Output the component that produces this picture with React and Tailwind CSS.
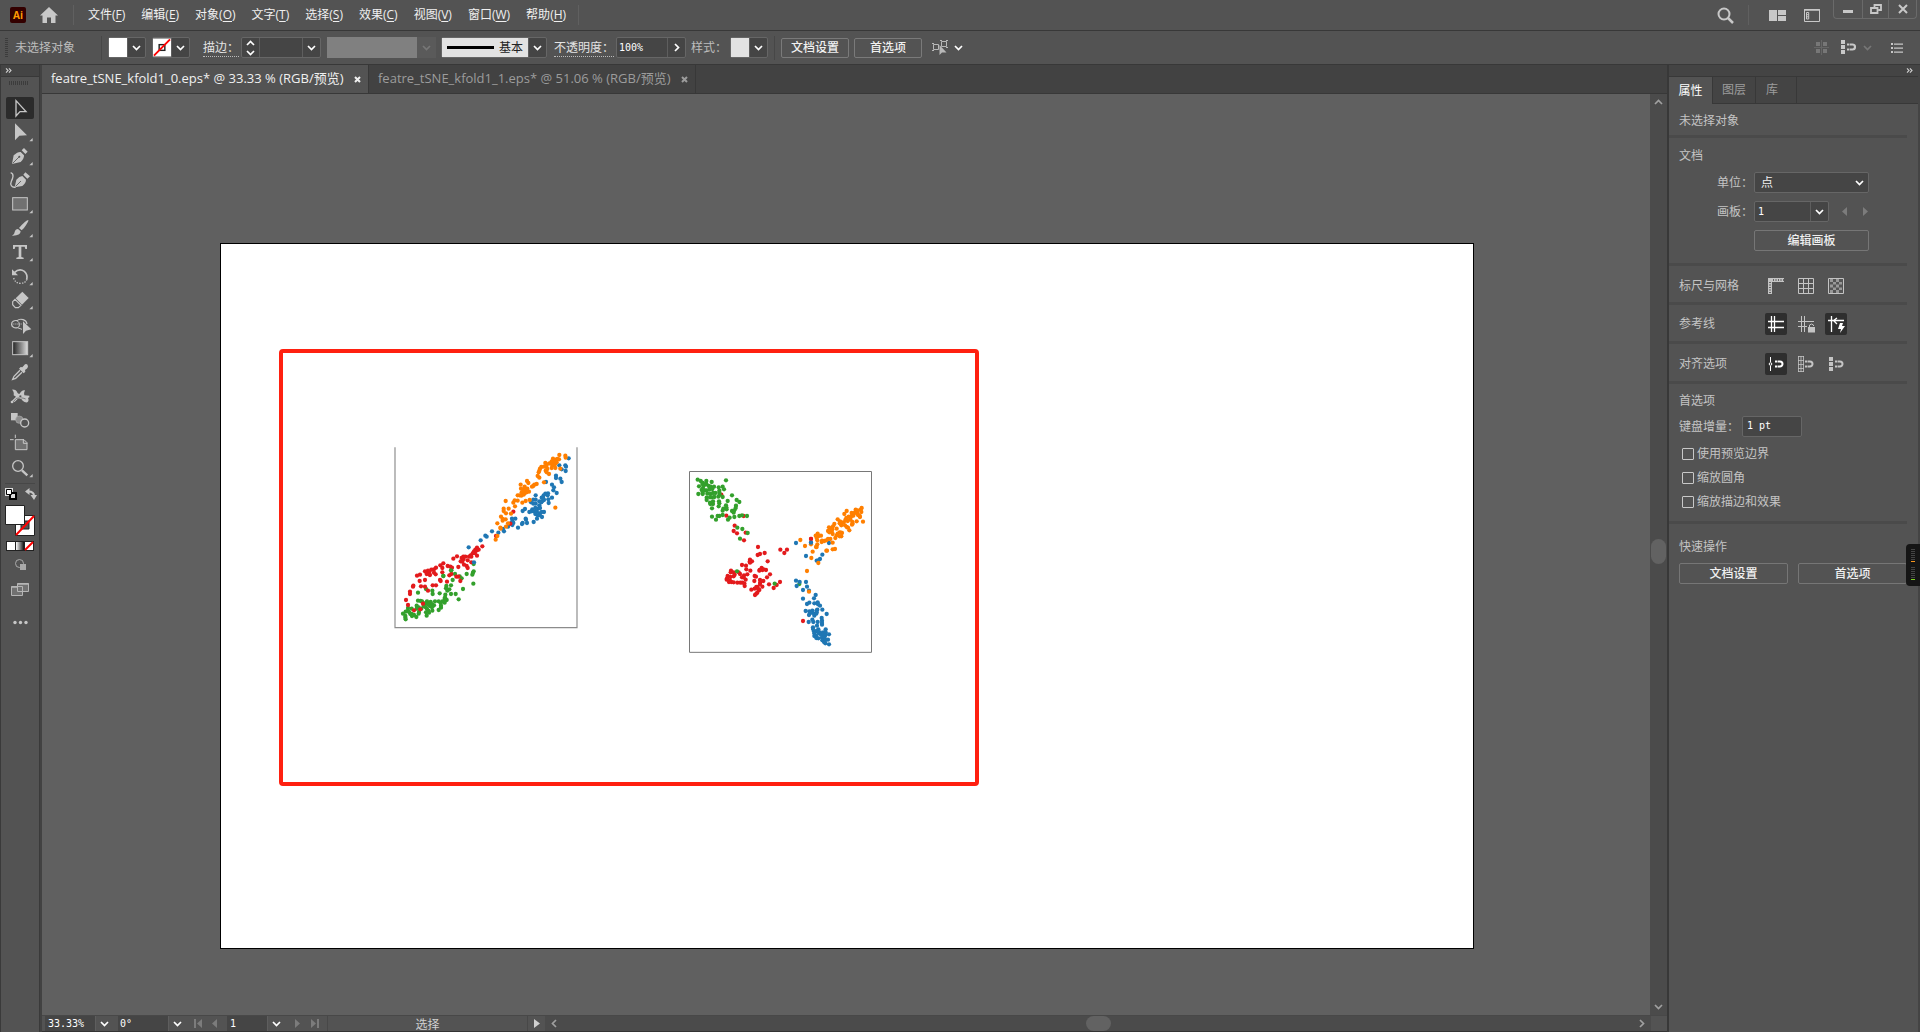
import React, { useState } from 'react';
import clsx from 'clsx';

const blue = '#1f77b4';
const orange = '#ff7f00';
const red = '#e31a1c';
const green = '#33a02c';

const leftPlot = [
  { color: blue, points: '566,85 538,106 556,106 558,110 557,123 545,118 528,137 528,144 541,146 545,156 498,156 516,164 522,172 520,181 530,189 504,190 496,191 491,196 485,203 516,203 467,196 460,209 453,217 460,221 467,221 467,209 478,214 486,214 492,210 505,208 506,219 503,196 490,206 484,217 478,226 474,236 480,234 466,234 457,238 448,246 455,244 462,244 435,237 428,243 470,244 478,250 485,246 492,246 466,252 473,256 480,256 486,261 471,266 461,276 437,266 438,269 428,279 441,279 426,282 414,293 396,266 406,266 397,274 400,279 397,285 391,281 384,290 369,297 372,304 355,308 336,304 316,317 320,320 302,331 266,352' },
  { color: green, points: '281,402 281,424 279,428 277,434 260,432 225,432 214,421 190,438 239,439 245,445 218,450 280,461 213,466 249,477 199,468 198,475 208,478 202,482 213,492 196,494 227,492 236,508 200,510 194,507 179,490 158,492 157,482 138,477 114,488 195,502 194,518 187,514 176,514 182,519 165,514 152,516 141,514 138,519 126,514 114,512 122,513 147,520 154,523 162,526 183,527 183,533 176,540 157,523 156,532 157,542 150,528 144,524 132,524 137,532 141,537 145,542 147,548 138,547 140,557 131,528 124,536 116,532 110,527 110,536 117,546 116,551 109,561 102,555 95,552 95,536 84,534 84,542 88,547 91,552 96,558 77,545 69,551 76,558 76,563 77,568' },
  { color: red, points: '307,349 291,353 286,359 291,361 296,359 282,364 285,369 278,370 291,377 272,376 274,380 267,380 250,380 245,384 250,388 263,391 242,394 247,395 231,379 220,386 256,380 274,397 252,404 260,408 263,414 235,411 216,413 211,410 203,408 190,400 181,406 187,414 168,413 162,418 154,419 144,422 135,424 142,427 148,426 162,428 167,433 150,435 140,432 147,433 120,434 111,437 187,427 214,432 208,436 229,440 235,440 241,453 201,455 180,450 182,453 135,450 119,453 100,467 99,470 123,469 135,470 158,466 168,466 144,482 90,485 90,492 78,510 84,525 129,521 121,538 102,541 348,318 400,245 391,281' },
  { color: orange, points: '538,75 556,77 557,83 519,86 528,89 537,88 532,87 515,94 524,95 508,100 496,99 501,103 514,102 520,105 525,103 530,97 484,111 492,110 499,110 515,114 526,114 541,116 480,116 478,122 476,127 502,117 497,122 500,127 507,132 473,138 478,143 492,157 470,162 463,164 456,170 460,168 441,153 445,159 422,164 434,170 423,176 433,175 442,176 430,182 436,181 447,185 440,187 425,187 434,190 431,194 413,196 419,196 424,197 377,213 413,212 404,211 400,218 427,218 437,213 449,210 405,229 386,236 371,236 371,243 378,250 393,251 526,233 363,260 377,268 368,272 368,267 352,280 361,293 362,296 384,280 378,290 352,318 347,329' },
  { color: blue, points: '282,397' },
  { color: green, points: '213,421 190,438' }
];

const rightPlot = [
  { color: red, points: '154,104 169,167 221,168 194,197 191,213 201,220 222,241 227,218 264,261 263,285 270,282 284,279 293,304 331,269 351,269 343,279 240,299 246,304 239,305 240,308 216,315 228,317 229,328 241,332 275,324 269,330 277,330 288,330 268,332 281,328 300,343 291,352 183,332 182,337 191,337 194,344 206,337 210,342 173,348 171,355 181,351 191,349 170,359 180,362 177,366 184,366 191,367 202,368 211,368 217,368 222,346 232,343 221,352 216,352 227,359 223,370 224,378 254,348 258,350 253,363 270,360 280,363 271,367 270,372 277,380 263,381 259,381 254,386 244,389 268,390 265,388 262,398 259,401 255,405 297,373 311,384 320,375 330,366 399,483 423,237' },
  { color: green, points: '83,59 92,63 97,68 109,63 108,70 125,66 168,61 87,79 98,73 103,75 109,73 116,78 122,80 132,80 146,82 158,80 162,88 99,84 95,90 105,91 110,91 118,89 127,87 98,99 85,102 98,102 112,101 121,102 129,99 136,99 148,92 148,98 149,104 110,120 110,113 120,112 126,112 133,111 145,110 158,111 186,106 120,128 121,132 129,124 129,132 147,124 148,130 146,139 126,145 173,123 200,120 208,126 168,136 169,142 170,148 198,137 197,144 186,153 191,158 193,151 160,146 158,152 158,165 148,168 143,168 126,170 138,179 174,179 179,173 193,171 208,168 216,166 231,168 202,203 217,207 233,219 210,236 201,334 314,371 388,372' },
  { color: blue, points: '378,249 423,248 477,249 408,288 457,284 450,297 440,302 445,301 378,362 389,366 380,378 408,366 411,380 399,390 417,392 437,405 432,415 399,416 411,432 418,428 433,430 443,427 444,433 450,437 407,453 418,454 427,452 440,451 442,449 457,449 421,459 426,457 432,461 440,457 417,465 433,467 439,461 470,462 416,486 427,479 430,486 443,486 455,474 456,482 456,489 456,494 441,497 429,502 429,507 445,508 467,508 432,514 440,513 450,517 460,517 467,517 433,520 433,528 439,528 447,520 453,524 459,522 466,526 477,523 439,534 445,535 456,533 463,532 457,541 462,546 467,540 474,539 466,550 477,553' },
  { color: orange, points: '391,240 405,258 423,253 428,275 424,294 445,309 411,333 417,395 443,221 437,227 440,234 446,228 453,227 442,241 442,253 440,261 438,261 455,246 456,242 463,243 469,241 474,237 481,237 471,272 488,268 495,267 469,272 488,248 496,234 477,202 482,205 474,213 478,217 487,208 485,214 493,192 489,199 488,222 500,206 503,221 500,226 509,229 514,229 516,219 509,217 513,218 503,178 510,184 509,190 514,187 521,187 514,196 525,196 530,201 534,203 538,211 523,162 530,153 529,174 526,180 533,183 541,179 536,170 541,174 547,186 548,191 546,194 550,167 545,168 545,159 554,159 557,149 557,154 562,160 564,165 569,168 570,171 563,151 572,149 575,144 574,156 560,184 579,185' },
  { color: red, points: '423,237' },
  { color: blue, points: '423,248' }
];

const Dots = ({ groups }) =>
  groups.map((group, i) => (
    <g key={i} fill={group.color}>
      {group.points.split(' ').map((p, j) => {
        const [x, y] = p.split(',');
        return <circle key={j} cx={x} cy={y} r="6.4" />;
      })}
    </g>
  ));

const Chevron = ({ dir = 'down', className = 'text-white', size = 9 }) => {
  const paths = {
    down: 'M1 3l3.5 3.5L8 3',
    up: 'M1 6l3.5-3.5L8 6',
    right: 'M3 1l3.5 3.5L3 8',
    left: 'M6 1L2.500 4.500L6 8'
  };
  return (
    <svg width={size} height={size} viewBox="0 0 9 9" fill="none" stroke="currentColor" strokeWidth="1.7" className={clsx('shrink-0', className)}>
      <path d={paths[dir]} />
    </svg>
  );
};

const DropButton = ({ label, dir, className }) => (
  <button aria-label={label} className={clsx('flex h-full w-[18px] shrink-0 items-center justify-center border-l border-[#5e5e5e]', className)}>
    <Chevron dir={dir} />
  </button>
);

const NoneSwatch = ({ size = 19 }) => (
  <svg width={size} height={size} viewBox="0 0 19 19">
    <rect width="19" height="19" fill="#fff" />
    <rect x="6.500" y="6.500" width="6" height="6" fill="none" stroke="#222" strokeWidth="1.500" />
    <path d="M1 18L18 1" stroke="#f00" strokeWidth="2" />
  </svg>
);

const menus = [
  ['文件', 'F'], ['编辑', 'E'], ['对象', 'O'], ['文字', 'T'], ['选择', 'S'],
  ['效果', 'C'], ['视图', 'V'], ['窗口', 'W'], ['帮助', 'H']
];

const MenuBar = () => (
  <header className="flex h-[31px] shrink-0 items-center border-b border-[#383838] pl-[10px]">
    <div className="flex h-4 w-4 items-center justify-center rounded-xs bg-[#330000] text-[10px] font-bold text-[#ff9a00]">Ai</div>
    <button aria-label="Home" className="ml-[14px] text-[#c8c8c8]">
      <svg width="18" height="16" viewBox="0 0 18 16" fill="currentColor">
        <path d="M9 0L18 8.500H15.500V16H11V10.500H7V16H2.500V8.500H0Z" />
      </svg>
    </button>
    <span className="ml-[15px] h-5 w-px bg-[#606060]" />
    <nav className="ml-[14px] flex gap-4 pb-px text-xs text-[#f0f0f0]">
      {menus.map(([name, key]) => (
        <button key={key} className="h-5 whitespace-nowrap">
          {name}(<span className="underline underline-offset-2">{key}</span>)
        </button>
      ))}
    </nav>
    <span className="ml-3 h-5 w-px bg-[#606060]" />
    <div className="ml-auto flex h-full items-center text-[#c8c8c8]">
      <button aria-label="Search">
        <svg width="17" height="17" viewBox="0 0 17 17" fill="none" stroke="currentColor" strokeWidth="2">
          <circle cx="7" cy="7" r="5.500" />
          <path d="M11 11l5 5" strokeWidth="2.500" />
        </svg>
      </button>
      <span className="ml-[14px] h-5 w-px bg-[#606060]" />
      <button aria-label="Arrange documents" className="ml-5">
        <svg width="17" height="11" viewBox="0 0 17 11" fill="currentColor">
          <path d="M0 0h8v11H0zM9 0h8v5H9zM9 6h8v5H9z" />
        </svg>
      </button>
      <button aria-label="Workspace" className="ml-[18px]">
        <svg width="16" height="13" viewBox="0 0 16 13" fill="none" stroke="currentColor">
          <path d="M.5.5h15v12H.5z" />
          <path d="M0 1h16" strokeWidth="1.500" />
          <path d="M2.500 3.500h2.200v6.500H2.500zM2.500 5.700h2.200M2.500 7.800h2.200" />
        </svg>
      </button>
      <div className="ml-[13px] mr-[3px] flex h-[19px] self-start rounded-b border border-t-0 border-[#6a6a6a]">
        <button aria-label="Minimize" className="flex w-7 items-center justify-center">
          <svg width="10" height="10" viewBox="0 0 10 10" fill="currentColor"><path d="M0 6h10v3H0z" /></svg>
        </button>
        <button aria-label="Restore" className="flex w-[27px] items-center justify-center border-x border-[#6a6a6a]">
          <svg width="12" height="10" viewBox="0 0 12 10" fill="none" stroke="currentColor" strokeWidth="1.800">
            <path d="M4.500 3V1H11v5H8.500M1 4h6.500v5H1z" />
          </svg>
        </button>
        <button aria-label="Close" className="flex w-[27px] items-center justify-center">
          <svg width="10" height="10" viewBox="0 0 10 10" fill="none" stroke="currentColor" strokeWidth="2">
            <path d="M1 1l8 8M9 1L1 9" />
          </svg>
        </button>
      </div>
    </div>
  </header>
);

const box = 'flex h-[21px] shrink-0 items-center rounded-xs border border-[#666] bg-[#454545]';

const ControlBar = () => (
  <div className="flex h-[34px] shrink-0 items-center border-b border-[#383838] pb-1 pl-[5px] pt-1 text-xs text-[#e4e4e4]">
    <svg width="3" height="20" className="shrink-0"><path d="M1.500 0v20" stroke="#3c3c3c" strokeWidth="3" strokeDasharray="1 1" /></svg>
    <span className="ml-[7px] w-[86px] text-[#bdbdbd]">未选择对象</span>
    <span className="h-6 w-px bg-[#474747]" />

    <div className={clsx(box, 'ml-[6px] w-[38px]')}>
      <span className="h-[19px] flex-1 bg-white" />
      <DropButton label="Fill" />
    </div>
    <div className={clsx(box, 'ml-[6px] w-[38px]')}>
      <NoneSwatch />
      <DropButton label="Stroke" />
    </div>

    <label htmlFor="weight" className="ml-[13px] w-[38px] whitespace-nowrap"><span className="border-b border-dotted border-[#bbb]">描边：</span></label>
    <div className={clsx(box, 'w-20')}>
      <button aria-label="Step weight" className="flex h-full w-[18px] shrink-0 flex-col items-center justify-center border-r border-[#5e5e5e]">
        <Chevron dir="up" />
        <Chevron />
      </button>
      <input id="weight" className="h-full w-full min-w-0 bg-transparent" />
      <DropButton label="Weight presets" />
    </div>

    <span className="ml-[6px] h-[21px] w-[90px] bg-[#808080]" />
    <span className="flex h-[21px] w-[19px] items-center justify-center bg-[#5a5a5a]"><Chevron className="text-[#777]" /></span>

    <div className={clsx(box, 'ml-[5px] w-[106px]')}>
      <span className="flex h-[19px] flex-1 items-center bg-[#e2e2e2] pl-[5px] text-[#222]">
        <span className="mr-[5px] h-[3px] w-[47px] bg-black" />
        基本
      </span>
      <DropButton label="Brush" />
    </div>

    <label htmlFor="opacity" className="ml-[7px] w-[62px] whitespace-nowrap"><span className="border-b border-dotted border-[#bbb]">不透明度：</span></label>
    <div className={clsx(box, 'w-[70px]')}>
      <input id="opacity" defaultValue="100%" className="h-full w-full min-w-0 bg-transparent pl-[2px] font-['DejaVu_Sans_Mono',monospace] text-[10px] text-white" />
      <DropButton label="Opacity" dir="right" />
    </div>

    <span className="ml-[5px] w-[39px] whitespace-nowrap text-[#bdbdbd]">样式：</span>
    <div className={clsx(box, 'w-[38px]')}>
      <span className="h-[19px] flex-1 bg-[#e2e2e2]" />
      <DropButton label="Style" />
    </div>
    <span className="ml-[6px] h-6 w-px bg-[#474747]" />
    <button className="ml-[6px] h-5 w-[68px] shrink-0 rounded-xs border border-[#7a7a7a] font-medium leading-none text-[#f0f0f0]">文档设置</button>
    <button className="ml-[5px] h-5 w-[68px] shrink-0 rounded-xs border border-[#7a7a7a] font-medium leading-none text-[#f0f0f0]">首选项</button>
    <button aria-label="Select similar" className="ml-[10px] flex items-center gap-[5px] text-[#b8b8b8]">
      <svg width="17" height="16" viewBox="0 0 17 16" fill="none" stroke="currentColor">
        <path d="M1.500 4.500h5v5h-5zM9.500 1.500h5v5h-5zM0 3.500h2M0 10.500h2M14 .5h2M14 7.500h2M8 .5h2" />
        <path d="M7.500 5v10l2.500-2.500h4.500z" fill="currentColor" stroke="none" />
      </svg>
      <Chevron />
    </button>

    <div className="ml-auto flex items-center pr-[17px] text-[#c8c8c8]">
      <svg width="15" height="15" viewBox="0 0 15 15" fill="#777">
        <path d="M2 2h4v4H2zM9 2h4v4H9zM2 9h4v4H2zM9 9h4v4H9z" />
        <path d="M7 0h1v15H7zM0 7h15v1H0z" fill="#666" />
      </svg>
      <svg width="15" height="15" viewBox="0 0 15 15" className="ml-3">
        <SnapShape />
      </svg>
      <Chevron className="ml-[7px] text-[#777]" />
      <button aria-label="Panel options" className="ml-[19px]">
        <svg width="12" height="10" viewBox="0 0 12 10" fill="currentColor">
          <path d="M0 0h2v2H0zM3 .5h9v1.200H3zM0 4h2v2H0zM3 4.500h9v1.200H3zM0 8h2v2H0zM3 8.500h9v1.200H3z" />
        </svg>
      </button>
    </div>
  </div>
);

const SnapShape = () => (
  <g fill="currentColor">
    <path d="M0 0h4v4H0zM0 5h4v4H0zM0 10h4v4H0z" />
    <path d="M6 4.500h2M6 9.500h2M8.500 4.500h3a2.500 2.500 0 010 5H8.500" fill="none" stroke="currentColor" strokeWidth="2.200" />
  </g>
);

// every tool is drawn on a 72 unit square, three units to the pixel
const tools = [
  { name: 'Selection', active: true, art: <path d="M24 14V60L36 47H54Z" fill="none" stroke="currentColor" strokeWidth="4" /> },
  { name: 'Direct selection', more: true, art: <path d="M21 10V61L34 47L57 46Z" /> },
  { name: 'Pen', more: true, art: <><path d="M12 60L17 34Q29 23 38 24L48 34Q49 43 38 54ZM41 19L48 12L59 23L52 30Z" /><path d="M14 58L33 39" stroke="#535353" strokeWidth="2.500" /><circle cx="34" cy="38" r="3" fill="#535353" /></> },
  { name: 'Curvature', art: <><path d="M20 58L25 35Q34 24 43 24L54 35Q54 45 43 54ZM46 20L52 13L66 25L58 32Z" /><path d="M22 56L39 39" stroke="#535353" strokeWidth="2.500" /><path d="M8 14C19 18 15 30 10 40S12 60 23 57" fill="none" stroke="currentColor" strokeWidth="4" /></> },
  { name: 'Rectangle', more: true, art: <rect x="14" y="17" width="44" height="37" fill="#717171" stroke="currentColor" strokeWidth="3" /> },
  { name: 'Paintbrush', more: true, art: <path d="M61 12Q63 15 48 36L41 43L33 36Q54 12 61 12ZM30 39L38 46Q37 60 12 59Q20 55 20 48Q22 39 30 39Z" /> },
  { name: 'Type', more: true, art: <path d="M15 15H57V27H52L50 20H40V51L47 53V57H25V53L32 51V20H22L20 27H15Z" /> },
  { name: 'Rotate', more: true, art: <><path d="M19 26Q34 12 49 22Q60 32 56 47" fill="none" stroke="currentColor" strokeWidth="5" /><path d="M12 16V34H30Z" /><path d="M17 42Q22 58 37 58T56 47" fill="none" stroke="currentColor" strokeWidth="4" strokeDasharray="4 4" /></> },
  { name: 'Eraser', more: true, art: <><path d="M43 11L62 30L42 50L23 31Z" /><path d="M21 34L39 52L31 59H22L14 50V41Z" fill="none" stroke="currentColor" strokeWidth="3.500" /></> },
  { name: 'Shape builder', art: <><path d="M28 47A13 11 0 1127 26A18 16 0 0157 36" fill="none" stroke="currentColor" strokeWidth="3.500" /><path d="M27 26Q36 30 34 43L28 47L42 52" fill="none" stroke="currentColor" strokeWidth="3" /><path d="M14 36H44" stroke="currentColor" strokeWidth="3.500" strokeDasharray="3 3" /><path d="M45 28V66L54 56L70 52Z" /></> },
  { name: 'Gradient', more: true, art: <><defs><linearGradient id="grad"><stop offset="0" stopColor="#222" /><stop offset="1" stopColor="#ddd" /></linearGradient></defs><rect x="14" y="17" width="45" height="39" fill="url(#grad)" stroke="currentColor" strokeWidth="3" /></> },
  { name: 'Eyedropper', art: <><path d="M51 13Q60 10 60 20Q59 26 51 30L52 35L47 40L33 26L38 21L43 22Z" /><path d="M36 31L18 49L14 58L23 55L42 37" fill="none" stroke="currentColor" strokeWidth="4" /></> },
  { name: 'Puppet warp', art: <><path d="M12 17Q23 16 26 22Q29 31 34 30Q42 16 51 19Q47 26 49 34L64 35Q66 40 60 42Q64 50 58 55Q50 56 44 50L40 45Q31 41 26 48Q20 56 14 55L12 50L24 38L17 34Q19 23 12 17Z" /><path d="M15 54Q24 39 37 41T53 45" fill="none" stroke="#535353" strokeWidth="2" /><circle cx="12" cy="54" r="4" /><circle cx="37" cy="37" r="4" fill="#535353" stroke="currentColor" strokeWidth="2" /></> },
  { name: 'Blend', art: <><path d="M9 15H29V37H9Z" /><circle cx="34" cy="35" r="11" fill="#8c8c8c" stroke="#aaa" strokeWidth="2" /><circle cx="50" cy="45" r="12" fill="#535353" stroke="currentColor" strokeWidth="4" /></> },
  { name: 'Artboard', art: <><path d="M22 23H48L57 32V53H22Z" fill="#717171" stroke="currentColor" strokeWidth="3" /><path d="M22 8V18M6 23H17M46 22V34H58" stroke="currentColor" strokeWidth="3" fill="none" /></> },
  { name: 'Zoom', more: true, art: <><circle cx="30" cy="30" r="16" fill="none" stroke="currentColor" strokeWidth="4" /><path d="M42 43L58 58" stroke="currentColor" strokeWidth="7" /></> }
];

const Toolbar = () => {
  const [current, setCurrent] = useState('Selection');
  return (
    <aside className="flex w-10 shrink-0 flex-col border-x border-[#3a3a3a]">
      <div className="flex h-3 shrink-0 items-center border-b border-[#383838] bg-[#444] pl-1"><DoubleChevron /></div>
      <svg width="20" height="4" className="ml-2 mt-1"><path d="M0 2h20" stroke="#3c3c3c" strokeWidth="4" strokeDasharray="1 1" /></svg>
      <div className="mt-3 flex flex-col items-center gap-[2px]">
        {tools.map((tool) => (
          <button
            key={tool.name}
            aria-label={tool.name}
            onClick={() => setCurrent(tool.name)}
            className={clsx('flex h-[22px] w-7 items-center justify-center rounded-xs text-[#c6c6c6]', current === tool.name && 'bg-[#2b2b2b]')}
          >
            <svg width="24" height="24" viewBox="0 0 72 72" fill="currentColor" className="shrink-0 overflow-visible">
              {tool.art}
              {tool.more && <path d="M74 54V64H64Z" />}
            </svg>
          </button>
        ))}
      </div>
      <div className="mx-1 mt-1 h-px bg-[#474747]" />
      <div className="mt-1 flex items-center justify-between pl-1 pr-[2px] text-[#c6c6c6]">
        <svg width="12" height="12" viewBox="0 0 12 12">
          <path d="M0 0h8v4h4v8H4V8H0z" fill="#ddd" />
          <path d="M5 5h6v6H5z" fill="#ddd" stroke="#000" strokeWidth="2" />
          <path d="M1.500 1.500h5v5h-5z" fill="#fff" stroke="#000" />
        </svg>
        <svg width="12" height="12" viewBox="0 0 12 12" fill="currentColor">
          <path d="M3.500 3.500Q9 3.500 9 8" fill="none" stroke="currentColor" strokeWidth="2" />
          <path d="M0 3.500L4.500 0V7ZM5.500 7H12L9 12Z" />
        </svg>
      </div>
      <svg width="30" height="31" viewBox="0 0 30 31" className="ml-1 mt-[5px]">
        <path d="M10.500 10.500h19v20h-19z" fill="#fff" stroke="#222" />
        <path d="M16 16h8v8h-8z" fill="#535353" stroke="#222" />
        <path d="M11 30L29 11" stroke="#f00" strokeWidth="2" />
        <path d="M.5.5h19v19H.5z" fill="#fff" stroke="#222" />
      </svg>
      <svg width="28" height="10" viewBox="0 0 28 10" className="ml-[5px] mt-[5px]">
        <path d="M0 0h28v10H0z" fill="#222" />
        <path d="M1 1h8v8H1zM19 1h8v8h-8z" fill="#fff" />
        <path d="M10 1h8v8h-8z" fill="url(#grad2)" />
        <path d="M19 9l8-8" stroke="#f00" strokeWidth="2" />
        <defs><linearGradient id="grad2"><stop offset="0" stopColor="#fff" /><stop offset="1" stopColor="#111" /></linearGradient></defs>
      </svg>
      <svg width="12" height="12" viewBox="0 0 12 12" className="ml-[14px] mt-2">
        <circle cx="4.500" cy="4.500" r="4" fill="none" stroke="#aaa" />
        <path d="M5 5h6v6H5z" fill="#aaa" />
      </svg>
      <svg width="18" height="13" viewBox="0 0 18 13" className="ml-[10px] mt-3 text-[#b5b5b5]" fill="#717171" stroke="currentColor">
        <path d="M.5 3.500h11v9H.5zM6.500.5h11v8h-11z" />
        <path d="M.5 4h6M6.500 1h11" strokeWidth="1.500" />
      </svg>
      <svg width="15" height="5" viewBox="0 0 15 5" fill="#c6c6c6" className="ml-3 mt-6">
        <circle cx="2" cy="2.500" r="1.700" /><circle cx="7.500" cy="2.500" r="1.700" /><circle cx="13" cy="2.500" r="1.700" />
      </svg>
    </aside>
  );
};

const DoubleChevron = () => (
  <svg width="7" height="5" viewBox="0 0 8 6" fill="none" stroke="#d0d0d0" strokeWidth="1.300">
    <path d="M1 .5L3.500 3L1 5.500M4.500 .5L7 3L4.500 5.500" />
  </svg>
);

const DocTab = ({ title, active }) => (
  <div className={clsx('flex items-center border-r border-[#383838] pl-[9px] pr-[7px]', active ? 'bg-[#535353] text-[#f0f0f0]' : 'text-[#9c9c9c]')}>
    <button className="w-[303px] whitespace-nowrap text-left text-[13px]">{title}</button>
    <button aria-label="Close tab">
      <svg width="7" height="7" viewBox="0 0 7 7" stroke="currentColor" strokeWidth="2"><path d="M1 1l5 5M6 1L1 6" /></svg>
    </button>
  </div>
);

const Canvas = () => (
  <div className="relative min-w-0 flex-1 overflow-hidden bg-[#606060]">
    <div className="absolute left-[178px] top-[149px] h-[706px] w-[1254px] border border-black bg-white">
      <svg viewBox="0 0 660 630" width="220" height="210" className="absolute left-[159px] top-[186px]">
        <path d="M45 52V593H591V52" fill="none" stroke="#8c8c8c" strokeWidth="3.500" />
        <Dots groups={leftPlot} />
      </svg>
      <svg viewBox="0 0 660 615" width="220" height="205" className="absolute left-[449px] top-[216px]">
        <path d="M58.500 34.500H604.500V577H58.500Z" fill="none" stroke="#787878" strokeWidth="3" />
        <Dots groups={rightPlot} />
      </svg>
      <div className="absolute left-[58px] top-[105px] h-[437px] w-[700px] rounded border-4 border-[#ff2010]" />
    </div>
  </div>
);

const NavIcon = ({ label, d }) => (
  <button aria-label={label} className="flex w-[17px] items-center justify-center">
    <svg width="9" height="9" viewBox="0 0 9 9" fill="#7c7c7c"><path d={d} /></svg>
  </button>
);

const StatusBar = () => {
  const field = "min-w-0 bg-[#454545] font-['DejaVu_Sans_Mono',monospace] text-[10px] text-white";
  return (
    <footer className="flex h-[17px] shrink-0 border-b border-t border-b-[#333] border-t-[#484848] bg-[#535353] pl-[3px]">
      <input aria-label="Zoom level" defaultValue="33.33%" className={clsx(field, 'w-[50px] pl-[3px]')} />
      <DropButton label="Zoom presets" />
      <input aria-label="Rotation" defaultValue="0°" className={clsx(field, 'ml-[5px] w-[50px] pl-[2px]')} />
      <DropButton label="Rotation presets" />
      <span className="ml-[4px] flex">
        <NavIcon label="First artboard" d="M0 0h2v9H0zM8 0v9L3 4.500z" />
        <NavIcon label="Previous artboard" d="M6 0v9L1 4.500z" />
      </span>
      <input aria-label="Artboard" defaultValue="1" className={clsx(field, 'ml-[3px] w-10 pl-[3px]')} />
      <DropButton label="Artboards" />
      <span className="ml-[4px] flex">
        <NavIcon label="Next artboard" d="M2 0v9l5-4.500z" />
        <NavIcon label="Last artboard" d="M7 0h2v9H7zM1 0v9l5-4.500z" />
      </span>
      <span className="ml-[4px] flex w-[201px] items-center justify-center border-x border-[#484848] pt-[3px] text-xs text-[#d0d0d0]">选择</span>
      <button aria-label="Status menu" className="flex w-[17px] items-center justify-center">
        <svg width="6" height="9" viewBox="0 0 6 9" fill="#d0d0d0"><path d="M0 0v9l6-4.500z" /></svg>
      </button>
      <div className="flex min-w-0 flex-1 items-center bg-[#4b4b4b] px-[5px]">
        <Chevron dir="left" className="text-[#a0a0a0]" />
        <span className="grow-[524]" />
        <span className="h-[15px] w-[25px] rounded-lg bg-[#626262]" />
        <span className="grow-[524]" />
        <Chevron dir="right" className="text-[#a0a0a0]" />
      </div>
      <span className="w-4" />
    </footer>
  );
};

const PanelButton = ({ children, className }) => (
  <button className={clsx('h-[21px] rounded-xs border border-[#767676] text-xs font-medium leading-none text-[#f0f0f0]', className)}>{children}</button>
);

const IconButton = ({ label, active, children }) => (
  <button aria-label={label} className={clsx('flex h-[22px] w-[22px] items-center justify-center rounded-xs', active ? 'bg-[#2e2e2e] text-white' : 'text-[#c4c4c4]')}>
    <svg width="16" height="16" viewBox="0 0 16 16" fill="none" stroke="currentColor" className="overflow-visible">{children}</svg>
  </button>
);

const IconRow = ({ title, children, className }) => (
  <div className={clsx('flex items-center border-b-3 border-[#4a4a4a] pl-[10px]', className)}>
    <span className="w-[86px]">{title}</span>
    <div className="flex gap-2">{children}</div>
  </div>
);

const checks = ['使用预览边界', '缩放圆角', '缩放描边和效果'];

const Magnet = () => <path d="M7 5.500h2M7 10.500h2M9.500 5.500h2.500a2.500 2.500 0 010 5H9.500" strokeWidth="2" />;

const PropertiesPanel = () => (
  <aside className="flex w-[253px] shrink-0 flex-col border-l-2 border-r-2 border-l-[#383838] border-r-[#444] text-xs text-[#c4c4c4]">
    <div className="flex h-3 shrink-0 items-center justify-end border-b border-[#383838] bg-[#444] pr-[5px]"><DoubleChevron /></div>
    <div className="flex h-[27px] shrink-0 bg-[#444] text-[#9c9c9c]">
      <button className="w-11 border-r border-[#383838] bg-[#535353] text-white">属性</button>
      <button className="w-[43px] border-b border-r border-[#383838]">图层</button>
      <button className="w-[41px] border-b border-r border-[#383838] pr-2">库</button>
      <span className="flex-1 border-b border-[#383838]" />
    </div>

    <div className="mr-[11px]">
      <div className="h-[34px] border-b-3 border-[#4a4a4a] pl-[10px] pt-[9px]">未选择对象</div>
      <div className="h-[128px] border-b-3 border-[#4a4a4a] pl-[10px] pt-[10px]">
        <h2>文档</h2>
        <div className="mt-2 flex items-center">
          <label htmlFor="units" className="ml-[38px] w-[37px] whitespace-nowrap">单位：</label>
          <div className="grid">
            <select id="units" className="col-start-1 row-start-1 h-[21px] w-[115px] appearance-none rounded-xs border border-[#666] bg-[#454545] pl-[6px] text-[#f0f0f0]">
              <option>点</option>
            </select>
            <Chevron className="pointer-events-none col-start-1 row-start-1 mr-[5px] self-center justify-self-end text-white" />
          </div>
        </div>
        <div className="mt-2 flex items-center">
          <label htmlFor="board" className="ml-[38px] w-[37px] whitespace-nowrap">画板：</label>
          <div className={clsx(box, 'w-[75px]')}>
            <input id="board" defaultValue="1" className="h-full w-full min-w-0 bg-transparent pl-[3px] font-['DejaVu_Sans_Mono',monospace] text-[10px] text-white" />
            <DropButton label="Artboard list" />
          </div>
          <span className="ml-2 flex gap-[3px]">
            <NavIcon label="Previous" d="M6 0v9L1 4.500z" />
            <NavIcon label="Next" d="M2 0v9l5-4.500z" />
          </span>
        </div>
        <PanelButton className="ml-[75px] mt-2 w-[115px]">编辑画板</PanelButton>
      </div>

      <IconRow title="标尺与网格" className="h-[39px] pt-[3px]">
        <IconButton label="Rulers">
          <path d="M0 0h16v4H4v12H0z" fill="currentColor" stroke="none" />
          <path d="M5 2h11M2 4v12" stroke="#444" strokeWidth="1.500" strokeDasharray="1 1.500" />
        </IconButton>
        <IconButton label="Grid"><path d="M.5.5h15v15H.5zM5.500.5v15M10.500.5v15M.5 5.500h15M.5 10.500h15" /></IconButton>
        <IconButton label="Transparency grid">
          <path d="M.5.5h15v15H.5z" fill="#555" />
          <path d="M2 2.500h12M2 8h12M2 13.500h12" stroke="#999" strokeWidth="3" strokeDasharray="3 3" />
          <path d="M5 5.300h9M5 10.700h9" stroke="#999" strokeWidth="2.600" strokeDasharray="3 3" />
        </IconButton>
      </IconRow>
      <IconRow title="参考线" className="h-[39px] pt-[2px]">
        <IconButton label="Show guides" active><path d="M0 5.500h16M0 11.500h16M3.500 0v16M6.500 0v16" strokeWidth="1.300" /></IconButton>
        <IconButton label="Lock guides">
          <path d="M0 5.500h16M0 10.500h9M3.500 0v16M6.500 0v16" />
          <path d="M10 11h7v5.500h-7z" fill="currentColor" stroke="none" />
          <path d="M11.500 11V9q2-2 4 0v1" />
        </IconButton>
        <IconButton label="Smart guides" active>
          <path d="M0 4.500h16M3.500 0v16M9 2L5.500 4.500L9 8" strokeWidth="1.300" />
          <path d="M12 7h3l-1 3h3l-5 7 1-4h-3z" fill="currentColor" stroke="none" />
        </IconButton>
      </IconRow>
      <IconRow title="对齐选项" className="h-[40px] pt-[2px]">
        <IconButton label="Snap to point" active><path d="M2.500 1v5M2.500 10v5" /><circle cx="2.500" cy="8" r="1.300" /><Magnet /></IconButton>
        <IconButton label="Snap to grid"><path d="M.5 0v16M5.500 0v16M3 0v16M0 .5h6M0 4.500h6M0 8.500h6M0 12.500h6M0 15.500h6" strokeWidth=".8" /><Magnet /></IconButton>
        <IconButton label="Snap to pixel"><path d="M1 1h4v4H1zM1 6h4v4H1zM1 11h4v4H1z" fill="currentColor" stroke="none" /><Magnet /></IconButton>
      </IconRow>

      <div className="h-[140px] border-b-3 border-[#4a4a4a] pl-[10px] pt-[9px]">
        <h2>首选项</h2>
        <div className="mt-[7px] flex items-center">
          <label htmlFor="increment" className="w-[63px] whitespace-nowrap">键盘增量：</label>
          <input id="increment" defaultValue="1 pt" className="h-[21px] w-[60px] rounded-xs border border-[#666] bg-[#454545] pb-[3px] pl-1 font-['DejaVu_Sans_Mono',monospace] text-[10px] text-white" />
        </div>
        <div className="mt-[5px]">
          {checks.map((name) => (
            <label key={name} className="flex h-6 items-center gap-[3px] pl-[3px]">
              <input type="checkbox" className="h-3 w-3 appearance-none rounded-[1px] border border-[#c8c8c8] checked:bg-[#c8c8c8]" />
              {name}
            </label>
          ))}
        </div>
      </div>

      <div className="pl-[10px] pt-[15px]">
        <h2>快速操作</h2>
        <div className="mt-2 flex gap-[10px]">
          <PanelButton className="flex-1">文档设置</PanelButton>
          <PanelButton className="flex-1">首选项</PanelButton>
        </div>
      </div>
    </div>
  </aside>
);

const LevelMeter = () => (
  <div className="absolute right-0 top-[544px] flex h-[42px] w-[14px] items-center justify-center rounded-l-sm bg-[#151515]">
    <svg width="4" height="32" viewBox="0 0 4 32">
      <path d="M2 0v13M2 18v12" stroke="#444" strokeWidth="4" strokeDasharray="1 1" />
      <path d="M0 12h4v1H0z" fill="#f7941d" />
      <path d="M0 30h4v1H0z" fill="#7ed321" />
    </svg>
  </div>
);

const App = () => {
  return (
    <div className="relative flex h-screen flex-col overflow-hidden bg-[#535353] font-['Open_Sans','Noto_Sans_CJK_SC',sans-serif]">
      <MenuBar />
      <ControlBar />
      <div className="flex min-h-0 flex-1">
        <Toolbar />
        <main className="flex min-w-0 flex-1 flex-col border-l-2 border-[#424242]">
          <div className="flex h-[29px] shrink-0 border-b border-[#383838] bg-[#424242]">
            <DocTab title="featre_tSNE_kfold1_0.eps* @ 33.33 % (RGB/预览)" active />
            <DocTab title="featre_tSNE_kfold1_1.eps* @ 51.06 % (RGB/预览)" />
          </div>
          <div className="flex min-h-0 flex-1">
            <Canvas />
            <div className="flex w-[17px] shrink-0 flex-col items-center bg-[#4b4b4b] py-1 pr-px">
              <Chevron dir="up" className="text-[#a0a0a0]" />
              <span className="grow-[432]" />
              <span className="h-[25px] w-[15px] rounded-lg bg-[#626262]" />
              <span className="grow-[438]" />
              <Chevron className="text-[#a0a0a0]" />
            </div>
          </div>
          <StatusBar />
        </main>
        <PropertiesPanel />
      </div>
      <LevelMeter />
    </div>
  );
};

export default App;
